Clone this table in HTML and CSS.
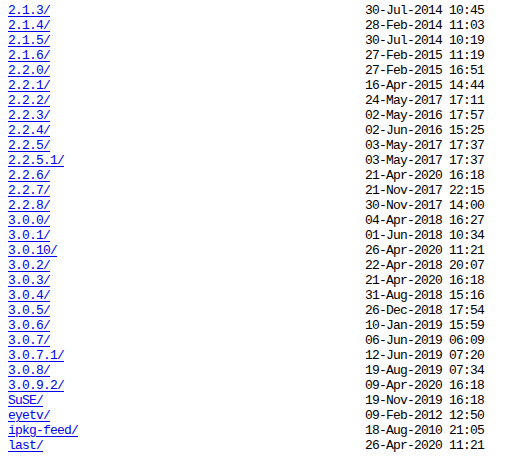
FILE: index.html
```html
<!DOCTYPE html>
<html>
<head>
    <meta charset="UTF-8">
    <title>Index of /</title>
    <link rel="stylesheet" href="styles.css">
</head>
<body>
    <div class="listing">
        <a href="2.1.3/">2.1.3/</a><span class="date">30-Jul-2014 10:45</span>
        <a href="2.1.4/">2.1.4/</a><span class="date">28-Feb-2014 11:03</span>
        <a href="2.1.5/">2.1.5/</a><span class="date">30-Jul-2014 10:19</span>
        <a href="2.1.6/">2.1.6/</a><span class="date">27-Feb-2015 11:19</span>
        <a href="2.2.0/">2.2.0/</a><span class="date">27-Feb-2015 16:51</span>
        <a href="2.2.1/">2.2.1/</a><span class="date">16-Apr-2015 14:44</span>
        <a href="2.2.2/">2.2.2/</a><span class="date">24-May-2017 17:11</span>
        <a href="2.2.3/">2.2.3/</a><span class="date">02-May-2016 17:57</span>
        <a href="2.2.4/">2.2.4/</a><span class="date">02-Jun-2016 15:25</span>
        <a href="2.2.5/">2.2.5/</a><span class="date">03-May-2017 17:37</span>
        <a href="2.2.5.1/">2.2.5.1/</a><span class="date">03-May-2017 17:37</span>
        <a href="2.2.6/">2.2.6/</a><span class="date">21-Apr-2020 16:18</span>
        <a href="2.2.7/">2.2.7/</a><span class="date">21-Nov-2017 22:15</span>
        <a href="2.2.8/">2.2.8/</a><span class="date">30-Nov-2017 14:00</span>
        <a href="3.0.0/">3.0.0/</a><span class="date">04-Apr-2018 16:27</span>
        <a href="3.0.1/">3.0.1/</a><span class="date">01-Jun-2018 10:34</span>
        <a href="3.0.10/">3.0.10/</a><span class="date">26-Apr-2020 11:21</span>
        <a href="3.0.2/">3.0.2/</a><span class="date">22-Apr-2018 20:07</span>
        <a href="3.0.3/">3.0.3/</a><span class="date">21-Apr-2020 16:18</span>
        <a href="3.0.4/">3.0.4/</a><span class="date">31-Aug-2018 15:16</span>
        <a href="3.0.5/">3.0.5/</a><span class="date">26-Dec-2018 17:54</span>
        <a href="3.0.6/">3.0.6/</a><span class="date">10-Jan-2019 15:59</span>
        <a href="3.0.7/">3.0.7/</a><span class="date">06-Jun-2019 06:09</span>
        <a href="3.0.7.1/">3.0.7.1/</a><span class="date">12-Jun-2019 07:20</span>
        <a href="3.0.8/">3.0.8/</a><span class="date">19-Aug-2019 07:34</span>
        <a href="3.0.9.2/">3.0.9.2/</a><span class="date">09-Apr-2020 16:18</span>
        <a href="SuSE/">SuSE/</a><span class="date">19-Nov-2019 16:18</span>
        <a href="eyetv/">eyetv/</a><span class="date">09-Feb-2012 12:50</span>
        <a href="ipkg-feed/">ipkg-feed/</a><span class="date">18-Aug-2010 21:05</span>
        <a href="last/">last/</a><span class="date">26-Apr-2020 11:21</span>
    </div>
</body>
</html>
```

FILE: styles.css
```css
html, body {
    margin: 0;
    padding: 0;
    background: #fff;
    overflow: hidden;
}

.listing {
    display: grid;
    grid-template-columns: 357px auto;
    grid-auto-rows: 15px;
    padding: 3px 0 0 8px;
    font-family: "Liberation Mono", "DejaVu Sans Mono", monospace;
    font-size: 13px;
    line-height: 15px;
    letter-spacing: -0.8px;
    color: #000;
    white-space: pre;
}

.listing a {
    color: #0000ee;
    text-decoration: underline;
    text-underline-offset: 2px;
    justify-self: start;
}
```
